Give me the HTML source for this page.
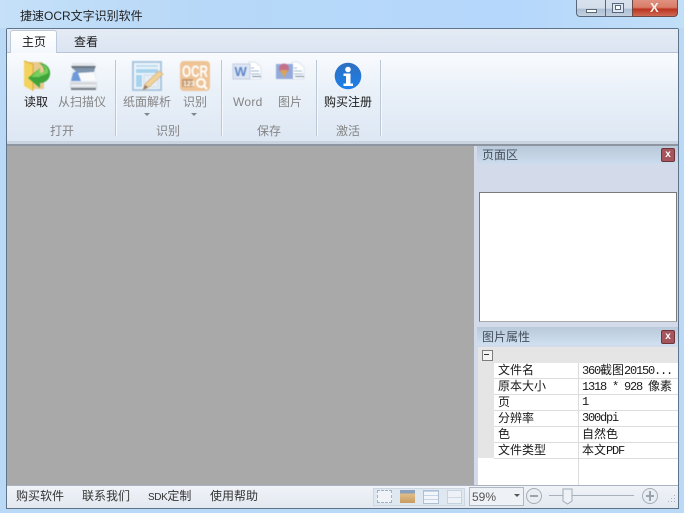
<!DOCTYPE html>
<html><head><meta charset="utf-8">
<style>
html,body{margin:0;padding:0}
body{width:684px;height:513px;overflow:hidden;position:relative;background:#b9d9f6;font-family:"Liberation Sans","Noto Sans CJK SC",sans-serif;font-size:12px;color:#1a1a1a}
.a{position:absolute}
.t{position:absolute;white-space:nowrap;line-height:14px}
.g{color:#858585}
.s{font-family:"Liberation Mono","Noto Sans CJK SC",monospace;letter-spacing:-1.2px}
.s b{font-weight:normal;font-family:"Noto Sans CJK SC",sans-serif;letter-spacing:0}
.v{position:absolute;width:1px;top:60px;height:76px;background:#bcc8d6;border-right:1px solid #f5f9fd}
.row{position:absolute;left:494px;width:184px;height:15px;background:#fff;border-bottom:1px solid #dcdcdc}
svg.i{filter:blur(.45px)}
</style></head><body>
<div class="a" style="left:0;top:0;width:684px;height:28px;background:linear-gradient(90deg,#c5e0f8 0,#b7d8f8 30%,#b5d7fb 75%,#c2dff8 100%)"></div>
<div class="t" style="left:20px;top:9px;font-size:12px;color:#222">捷速OCR文字识别软件</div>

<!-- window buttons -->
<div class="a" style="left:576px;top:0;width:29px;height:17px;border:1px solid #56677c;border-top:0;border-right:0;border-radius:0 0 0 4px;box-sizing:border-box;background:linear-gradient(#d8e2ee,#d3deea 50%,#aebfd3 58%,#c3d0df)"></div>
<div class="a" style="left:605px;top:0;width:27px;height:17px;border:1px solid #56677c;border-top:0;border-right:0;box-sizing:border-box;background:linear-gradient(#d8e2ee,#d3deea 50%,#aebfd3 58%,#c3d0df)"></div>
<div class="a" style="left:586px;top:9px;width:9px;height:2px;border:1px solid #59677a;background:#fff"></div>
<div class="a" style="left:612px;top:3px;width:10px;height:8px;border:1px solid #59677a;background:#dfe8f2"></div>
<div class="a" style="left:615px;top:5px;width:4px;height:3px;border:1px solid #59677a;background:#fff"></div>
<div class="a" style="left:632px;top:0;width:46px;height:17px;border:1px solid #6d4a45;border-top:0;border-radius:0 0 4px 0;box-sizing:border-box;background:linear-gradient(#e0917f,#d87d69 45%,#bb3420 58%,#cf6b55)"></div>
<div class="t" style="left:650px;top:1px;font-size:13px;font-weight:bold;color:#f3f0ee">X</div>

<!-- frame -->
<div class="a" style="left:6px;top:28px;background:#dce6f2;border:1px solid #5f7489;border-radius:2px 2px 0 0;width:671px;height:479px"></div>
<div class="a" style="left:7px;top:29px;width:671px;height:23px;background:linear-gradient(#e4ebf4,#dbe5f2)"></div>
<div class="a" style="left:7px;top:52px;width:671px;height:1px;background:#b6c4d6"></div>
<div class="a" style="left:10px;top:30px;width:47px;height:23px;background:linear-gradient(#fff,#f3f8fd);border:1px solid #bccadb;border-bottom:0;border-radius:3px 3px 0 0;box-sizing:border-box"></div>
<div class="t" style="left:22px;top:35px">主页</div>
<div class="t" style="left:74px;top:35px">查看</div>

<!-- ribbon -->
<div class="a" style="left:7px;top:53px;width:671px;height:88px;background:linear-gradient(#f9fbfe,#e9f0f8 45%,#dde7f3)"></div>
<div class="a" style="left:7px;top:141px;width:671px;height:3px;background:#c9d4e0"></div>
<div class="a" style="left:7px;top:144px;width:671px;height:2px;background:#8d96a0"></div>
<div class="v" style="left:115px"></div>
<div class="v" style="left:221px"></div>
<div class="v" style="left:316px"></div>
<div class="v" style="left:380px"></div>

<!-- folder icon -->
<svg class="a i" style="left:22px;top:58px" width="32" height="34" viewBox="0 0 32 34">
<path d="M7 4h13l2 3v24H7z" fill="#e8c98e"/>
<path d="M2 3l9 3v27l-9-5z" fill="#f3d35d"/>
<path d="M2 3l9 3v27" fill="none" stroke="#d9a93c"/>
<path d="M17 5c8 0 12 6 11 12-1 5-5 8-10 8v5L6 20l12-10v6c2 0 4-1 4-4 0-3-2-5-5-7z" fill="#3fa53a"/>
<path d="M18 10v5c2 0 5-1 5-4 0-2-2-4-4-5 5 1 8 5 7 9-4 3-8 3-8 3v1H9z" fill="#79cf5e"/>
</svg>
<!-- scanner icon -->
<svg class="a i" style="left:68px;top:61px" width="30" height="31" viewBox="0 0 30 31">
<path d="M4 2h23v3H4z" fill="#e4e8ec"/>
<path d="M3 5h25l-1 2H4z" fill="#69747f"/>
<path d="M4 7h23l2 14H2z" fill="#e9eef3"/>
<path d="M4 7h23l-1 4-16 1z" fill="#7f95ad"/>
<path d="M5 12l5-3 3 11H3z" fill="#6f9ad8"/>
<path d="M10 12l16-1 2 9H13z" fill="#f8fafc"/>
<path d="M2 21h27v6H2z" fill="#d5d9de"/>
<path d="M3 24h25v1H3z" fill="#fff"/>
<path d="M3 27h25v2H3z" fill="#747c85"/>
</svg>
<!-- layout icon -->
<svg class="a i" style="left:131px;top:60px" width="34" height="33" viewBox="0 0 34 33">
<rect x="2" y="2" width="28" height="28" fill="#eef5fb" stroke="#a9c6de" stroke-width="2"/>
<rect x="5" y="5" width="22" height="2" fill="#bcdcf0"/>
<rect x="5" y="9" width="22" height="4" fill="#a8d3ee"/>
<rect x="5" y="15" width="6" height="12" fill="#a8d3ee"/>
<rect x="13" y="15" width="14" height="12" fill="#e6eff7" stroke="#cddbe8"/>
<path d="M12 30l2-6 14-13 4 3-14 13z" fill="#f0d29b" stroke="#d6ae74" stroke-width=".7"/>
<path d="M12 30l2-5 3 2z" fill="#8a7a68"/>
</svg>
<!-- OCR icon -->
<svg class="a i" style="left:180px;top:61px" width="30" height="30" viewBox="0 0 30 30">
<rect width="30" height="30" rx="4" fill="#eec497"/>
<text x="2" y="16" font-family="Liberation Sans" font-size="17" font-weight="bold" fill="#fff" textLength="26" lengthAdjust="spacingAndGlyphs">OCR</text>
<rect x="2" y="18" width="11" height="8" fill="#c69a70"/>
<text x="3" y="25" font-family="Liberation Sans" font-size="7" font-weight="bold" fill="#fff">123</text>
<circle cx="21" cy="22" r="4" fill="none" stroke="#fff" stroke-width="2"/>
<path d="M24 25l3 3" stroke="#fff" stroke-width="2"/>
</svg>
<!-- word icon -->
<svg class="a i" style="left:232px;top:61px" width="30" height="22" viewBox="0 0 30 22">
<path d="M17 1h6l6 5v12H17z" fill="#fff" stroke="#dde4ec"/>
<rect x="1" y="3" width="17" height="15" fill="#dfe6f3" stroke="#c0cde2"/>
<text x="2.500" y="15" font-family="Liberation Sans" font-weight="bold" font-size="13" fill="#5d86c9">W</text>
<path d="M19 7h3M19 10h8M19 13h9" stroke="#9fb6cd"/>
<path d="M20 15.500h9" stroke="#6f8299"/>
</svg>
<!-- image icon -->
<svg class="a i" style="left:275px;top:61px" width="30" height="22" viewBox="0 0 30 22">
<path d="M17 1h6l6 5v12H17z" fill="#fff" stroke="#dde4ec"/>
<rect x="1" y="3" width="17" height="15" fill="#93abdc"/>
<circle cx="9" cy="7.500" r="5" fill="#c4708a"/>
<path d="M5 9l4 8 4-8z" fill="#d9a35b"/>
<path d="M19 7h3M19 10h8M19 13h9" stroke="#9fb6cd"/>
<path d="M20 15.500h9" stroke="#6f8299"/>
</svg>
<!-- info icon -->
<svg class="a" style="left:334px;top:62px" width="28" height="28" viewBox="0 0 28 28">
<defs><linearGradient id="b" x1="0" y1="0" x2="0" y2="1"><stop offset="0" stop-color="#2f6fc0"/><stop offset="1" stop-color="#1a80ea"/></linearGradient></defs>
<circle cx="14" cy="14" r="13.300" fill="url(#b)"/>
<circle cx="14" cy="7.500" r="2.800" fill="#fff"/>
<path d="M9.500 11.500h7v10h2.500v2.500H9.500v-2.500h2.500v-7.500H9.500z" fill="#fff"/>
</svg>

<div class="t" style="left:24px;top:95px">读取</div>
<div class="t g" style="left:58px;top:95px">从扫描仪</div>
<div class="t g" style="left:123px;top:95px">纸面解析</div>
<div class="t g" style="left:183px;top:95px">识别</div>
<div class="t g" style="left:233px;top:95px;letter-spacing:.3px">Word</div>
<div class="t g" style="left:278px;top:95px">图片</div>
<div class="t" style="left:324px;top:95px">购买注册</div>
<div class="a" style="left:144px;top:113px;border:3px solid transparent;border-top:3px solid #7f8790;border-bottom:0"></div>
<div class="a" style="left:191px;top:113px;border:3px solid transparent;border-top:3px solid #7f8790;border-bottom:0"></div>
<div class="t g" style="left:50px;top:124px">打开</div>
<div class="t g" style="left:156px;top:124px">识别</div>
<div class="t g" style="left:257px;top:124px">保存</div>
<div class="t g" style="left:336px;top:124px">激活</div>

<!-- main area -->
<div class="a" style="left:7px;top:146px;width:467px;height:339px;background:#a9a9a9"></div>
<div class="a" style="left:474px;top:146px;width:204px;height:339px;background:#d3dbeb"></div>

<!-- page panel -->
<div class="a" style="left:477px;top:146px;width:201px;height:18px;background:linear-gradient(#b9c9d9,#cbdcee)"></div>
<div class="t" style="left:482px;top:148px;color:#454f5c">页面区</div>
<div class="a" style="left:661px;top:148px;width:14px;height:14px;background:#a5555c;border:1px solid #70343a;border-radius:2px;box-sizing:border-box;color:#fff;font-size:10px;font-weight:bold;text-align:center;line-height:11px">x</div>
<div class="a" style="left:479px;top:192px;width:198px;height:130px;background:#fff;border:1px solid #7a7a7a;border-bottom-color:#aaa;box-sizing:border-box"></div>

<!-- props panel -->
<div class="a" style="left:477px;top:327px;width:201px;height:18px;background:linear-gradient(#b9c9d9,#cfe0f0)"></div>
<div class="t" style="left:482px;top:330px;color:#454f5c">图片属性</div>
<div class="a" style="left:661px;top:330px;width:14px;height:14px;background:#a5555c;border:1px solid #70343a;border-radius:2px;box-sizing:border-box;color:#fff;font-size:10px;font-weight:bold;text-align:center;line-height:11px">x</div>
<div class="a" style="left:478px;top:347px;width:200px;height:138px;background:#fff"></div>
<div class="a" style="left:478px;top:347px;width:200px;height:16px;background:#e5e5e5"></div>
<div class="a" style="left:478px;top:363px;width:16px;height:95px;background:#e5e5e5"></div>
<div class="a" style="left:482px;top:350px;width:9px;height:9px;background:#f4f4f4;border:1px solid #7d7d7d"></div>
<div class="a" style="left:484px;top:354px;width:5px;height:1px;background:#333"></div>
<div class="row" style="top:363px"></div>
<div class="row" style="top:379px"></div>
<div class="row" style="top:395px"></div>
<div class="row" style="top:411px"></div>
<div class="row" style="top:427px"></div>
<div class="row" style="top:443px"></div>
<div class="a" style="left:578px;top:363px;width:1px;height:122px;background:#dcdcdc"></div>
<div class="t" style="left:498px;top:363px">文件名</div>
<div class="t" style="left:498px;top:379px">原本大小</div>
<div class="t" style="left:498px;top:395px">页</div>
<div class="t" style="left:498px;top:411px">分辨率</div>
<div class="t" style="left:498px;top:427px">色</div>
<div class="t" style="left:498px;top:443px">文件类型</div>
<div class="t s" style="left:582px;top:363px">360<b>截图</b>20150...</div>
<div class="t s" style="left:582px;top:379px">1318 * 928 <b>像素</b></div>
<div class="t s" style="left:582px;top:395px">1</div>
<div class="t s" style="left:582px;top:411px">300dpi</div>
<div class="t s" style="left:582px;top:427px"><b>自然色</b></div>
<div class="t s" style="left:582px;top:443px"><b>本文</b>PDF</div>

<!-- status bar -->
<div class="a" style="left:7px;top:485px;width:671px;height:23px;background:linear-gradient(#f0f3f8,#e3e8f0);border-top:1px solid #a9b4c0;box-sizing:border-box"></div>
<div class="a" style="left:6px;top:508px;width:672px;height:1px;background:#5f7489"></div>
<div class="t" style="left:16px;top:489px;color:#333">购买软件</div>
<div class="t" style="left:82px;top:489px;color:#333">联系我们</div>
<div class="t" style="left:148px;top:489px;color:#333"><span style="font-size:10px;letter-spacing:-.4px">SDK</span>定制</div>
<div class="t" style="left:210px;top:489px;color:#333">使用帮助</div>
<div class="a" style="left:373px;top:488px;width:92px;height:18px;border:1px solid #cdd7e2;box-sizing:border-box;background:#dfe7f1"></div>
<div class="a" style="left:377px;top:490px;width:15px;height:13px;background:#f0f3f8;border:1px dashed #9fb3c8;box-sizing:border-box"></div>
<div class="a" style="left:400px;top:490px;width:15px;height:13px;background:linear-gradient(#8aa0bd 25%,#e3bf8b 25%,#c79c62);box-sizing:border-box"></div>
<div class="a" style="left:423px;top:490px;width:16px;height:14px;background:repeating-linear-gradient(#c5d5e6 0 1px,#f2f6fa 1px 4px);border:1px solid #aebfd3;box-sizing:border-box"></div>
<div class="a" style="left:447px;top:490px;width:15px;height:14px;background:linear-gradient(#eef2f7 48%,#aebfd3 48%,#aebfd3 54%,#eef2f7 54%);border:1px solid #c5d2e0;box-sizing:border-box"></div>
<div class="a" style="left:469px;top:487px;width:55px;height:19px;border:1px solid #b0b8c2;box-sizing:border-box;background:#eef1f6"></div>
<div class="t" style="left:472px;top:490px;color:#555">59%</div>
<div class="a" style="left:514px;top:494px;border:3px solid transparent;border-top:3px solid #555;border-bottom:0"></div>
<svg class="a" style="left:526px;top:487px" width="150" height="20" viewBox="0 0 150 20">
<circle cx="8" cy="9" r="7.500" fill="#e8edf3" stroke="#a6aeb8"/>
<rect x="4" y="8" width="8" height="2" fill="#9aa3ad"/>
<path d="M23 8.500h85" stroke="#a9b2bc"/>
<path d="M37 2h9v12l-4.500 3-4.500-3z" fill="#eef2f6" stroke="#a2aab4"/>
<circle cx="124" cy="9" r="7.500" fill="#e8edf3" stroke="#a6aeb8"/>
<path d="M120 8h3v-4h2v4h3v2h-3v4h-2v-4h-3z" fill="#9aa3ad"/>
<path d="M148 8h1v1h-1zM145 11h1v1h-1zM148 11h1v1h-1zM142 14h1v1h-1zM145 14h1v1h-1zM148 14h1v1h-1z" fill="#a9b2bc"/>
</svg>
<div class="a" style="left:0;top:509px;width:684px;height:4px;background:#b9d9f6"></div>
</body></html>
